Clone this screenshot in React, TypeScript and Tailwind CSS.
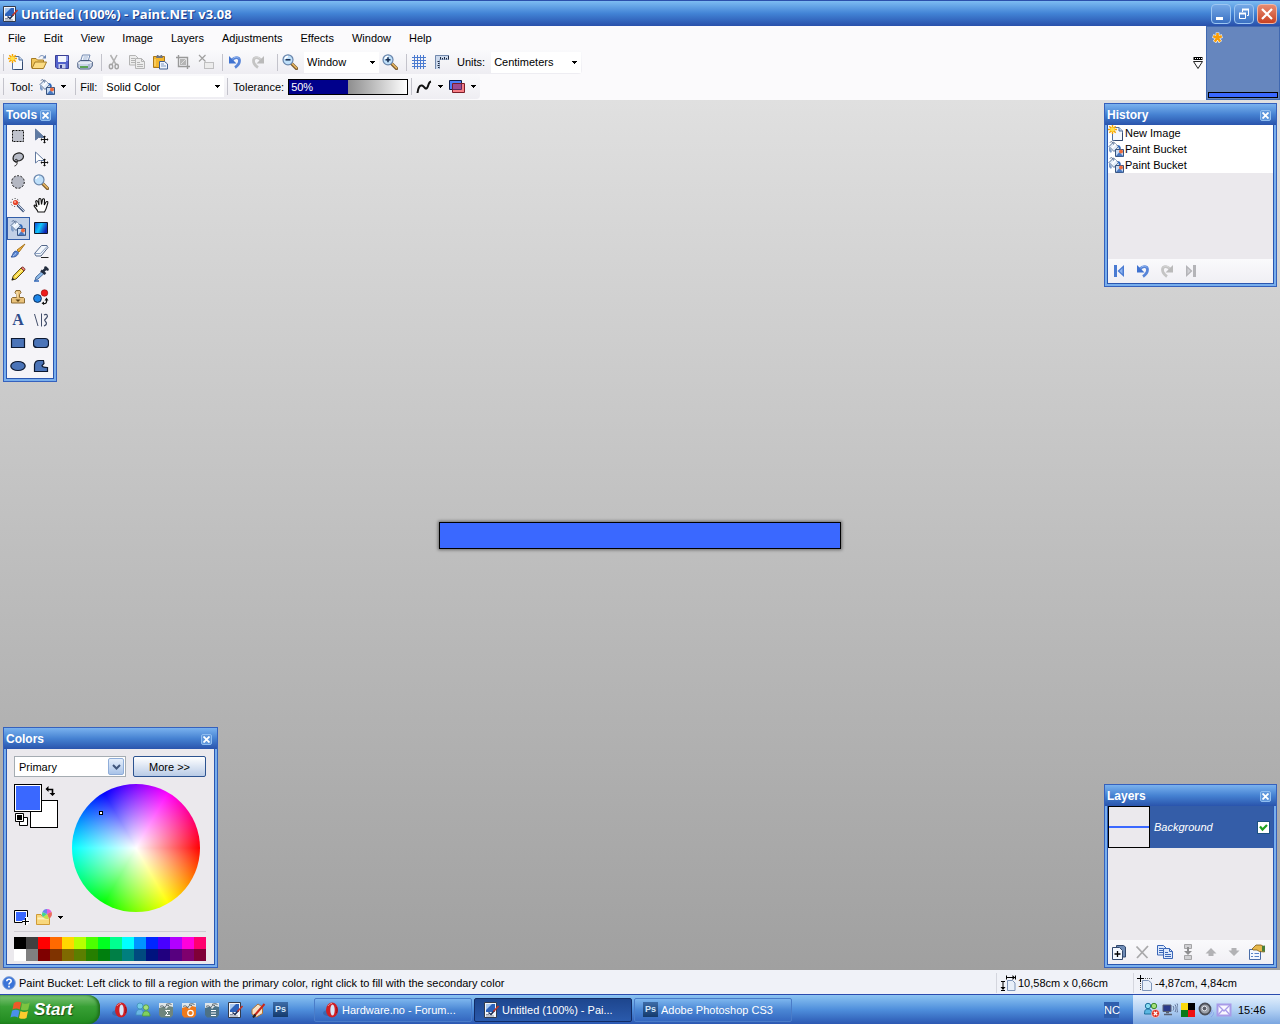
import type { ReactNode } from "react";
import clsx from "clsx";

type IconProps = { children: ReactNode; size?: string };

const Icon = ({ children, size = "size-4" }: IconProps) => (
  <svg viewBox="0 0 16 16" className={clsx("shrink-0", size)} fill="none" aria-hidden="true">
    {children}
  </svg>
);

const Caret = () => (
  <svg viewBox="0 0 5 3" className="h-[3px] w-[5px] shrink-0" shapeRendering="crispEdges" aria-hidden="true">
    <path d="M0 0h5v1H4v1H3v1H2V2H1V1H0z" fill="#000" />
  </svg>
);

/* ---------- toolbar icons ---------- */

const NewIcon = () => (
  <Icon>
    <path d="M4.500 2.500h6.500l3.500 3.500v9.500h-10z" fill="#f4f8fe" stroke="#54719c" />
    <path d="M11 2.500V6h3.500" fill="#c4d6ee" stroke="#54719c" />
    <path d="M14.500 8v7.500h-8" stroke="#33496e" />
    <path d="M4.500 0v9M0 4.500h9M1.300 1.300l6.400 6.400M7.700 1.300L1.300 7.700" stroke="#f7a400" strokeWidth="1.500" />
    <circle cx="4.500" cy="4.500" r="2.200" fill="#ffe14a" />
  </Icon>
);

const OpenIcon = () => (
  <Icon>
    <path d="M.5 13.500v-9h4.500l1.500 1.500h6v7.500z" fill="#f0c65c" stroke="#a67c25" />
    <path d="M1 14.500l3-6.500h11.500l-3 6.500z" fill="#fbdc84" stroke="#a67c25" />
    <path d="M8 3.500c1.500-2.500 4-2.500 5.500-.5" stroke="#6a86b4" />
    <path d="M15 .8V4.500h-3.700z" fill="#6a86b4" />
  </Icon>
);

const SaveIcon = () => (
  <Icon>
    <path d="M1.500 1.500h13v13H3l-1.500-1.500z" fill="#5362cc" stroke="#3a3f94" />
    <path d="M4 2h8v6H4z" fill="#f3f6fd" />
    <path d="M12 2h2v5h-2z" fill="#8d9be8" />
    <path d="M4.500 10h7v4.500h-7z" fill="#c5cceb" />
    <path d="M6 11h2v3H6z" fill="#343d8c" />
  </Icon>
);

const PrintIcon = () => (
  <Icon>
    <path d="M5.500 1h7.500l-2 6.500H3.500z" fill="#f7fbff" stroke="#7188b0" />
    <path d="M6.500 3h4.500M6 5h4.500" stroke="#9db1d2" />
    <path d="M.8 8.500l2.500-2h9.500l2.500 1.500v4l-2.500 3H3l-2.200-1.500z" fill="#c9d4e6" stroke="#495c80" />
    <path d="M1 9h11l3-1" stroke="#fff" />
    <path d="M3 12h8v2H3z" fill="#5ba454" />
    <path d="M12 10v4" stroke="#8c9dbb" />
  </Icon>
);

const CutIcon = () => (
  <Icon>
    <path d="M4.500 1l5.500 9.500M11 1L6 10.500" stroke="#b1b1b1" strokeWidth="1.500" />
    <ellipse cx="5" cy="12.500" rx="1.700" ry="2.300" stroke="#a3a3a3" strokeWidth="1.400" />
    <ellipse cx="10.700" cy="12.500" rx="1.700" ry="2.300" stroke="#a3a3a3" strokeWidth="1.400" />
  </Icon>
);

const CopyIcon = ({ blue = false }: { blue?: boolean }) => {
  const line = blue ? "#3a66b8" : "#b4b4b4";
  const paper = blue ? "#dce9fc" : "#ededed";
  return (
    <Icon>
      <path d="M.5 1.500h6l2.500 2.500v7H.5z" fill={paper} stroke={line} />
      <path d="M2 4.500h4M2 6.500h5M2 8.500h5" stroke={line} />
      <path d="M6.500 4.500h6l3 3v7h-9z" fill={paper} stroke={line} />
      <path d="M12.500 4.500v3h3M8 8.500h3M8 10.500h6M8 12.500h6" stroke={line} />
    </Icon>
  );
};

const PasteIcon = () => (
  <Icon>
    <path d="M1.500 2.500h11v11h-11z" fill="#f3b62c" stroke="#a9771a" />
    <path d="M5 1h5l1 3H4z" fill="#6e7480" />
    <path d="M6.500 1h2v1h-2z" fill="#e6e9ee" />
    <path d="M3 5v7" stroke="#ffe08b" />
    <path d="M7.500 7.500h5l3 2.500v5h-8z" fill="#eef4fd" stroke="#43608f" />
    <path d="M9 10h3M9 12h5" stroke="#829bc2" />
  </Icon>
);

const CropIcon = () => (
  <Icon>
    <path d="M3.500 1v11.500H15M1 3.500h11.500V15" stroke="#999" strokeWidth="1.400" />
    <path d="M5 5h6v6H5z" fill="#b5b5b5" />
    <path d="M6 10l5-5" stroke="#ddd" />
  </Icon>
);

const DeselectIcon = () => (
  <Icon>
    <path d="M1 1l6.500 6.500M7.500 1L1 7.500" stroke="#a0a0a0" strokeWidth="1.200" />
    <path d="M6.500 8.500h9v6h-9z" fill="#ececec" stroke="#8e8e8e" strokeDasharray="1 1" />
  </Icon>
);

const UndoIcon = ({ mirrored = false }: { mirrored?: boolean }) => (
  <Icon>
    <g transform={mirrored ? "matrix(-1 0 0 1 16 0)" : undefined}>
      <path
        d="M5 6c3-3.500 7.500-3 7.500.8 0 2.700-1.500 4.700-4.500 6.700"
        stroke={mirrored ? "#c4c4c4" : "#5784d8"}
        strokeWidth="2.800"
      />
      <path d="M2 2v7.500h7.500z" fill={mirrored ? "#bababa" : "#3f72d0"} />
      <path d="M5.500 5c2-2.200 5-2.800 6.500-.5" stroke={mirrored ? "#dadada" : "#9fc0f4"} />
    </g>
  </Icon>
);

const LensIcon = ({ sign }: { sign?: "plus" | "minus" }) => (
  <Icon>
    <path d="M9 9l5.500 5.500" stroke="#7c5c2e" strokeWidth="3.200" strokeLinecap="round" />
    <path d="M9.500 9l5 5" stroke="#ecba63" strokeWidth="1.500" strokeLinecap="round" />
    <circle cx="6" cy="5.800" r="5" fill="#bfe0fa" stroke="#6a86ac" strokeWidth="1.200" />
    <path d="M3 5a3.200 3.200 0 013-2.500" stroke="#fff" strokeWidth="1.500" />
    {sign && <path d="M3.500 5.800h5" stroke="#12284c" strokeWidth="1.500" />}
    {sign === "plus" && <path d="M6 3.300v5" stroke="#12284c" strokeWidth="1.500" />}
  </Icon>
);

const GridIcon = () => (
  <Icon>
    <path d="M3.500 1v14M6.500 1v14M9.500 1v14M12.500 1v14M1 3.500h14M1 6.500h14M1 9.500h14M1 12.500h14" stroke="#4b7bd0" />
  </Icon>
);

const RulerIcon = () => (
  <Icon>
    <path d="M1 1h14v4.500H5.500V15H1z" fill="#ccd9ec" />
    <path d="M1.500 15V1.500H15" stroke="#7289ad" />
    <path d="M5.500 15V5.500H15" stroke="#9fb3d1" />
    <path d="M6.500 3v2.500M8.500 4v1.500M10.500 3v2.500M12.500 4v1.500M14.500 2v3.500M3.500 7.500h2M4 9.500h1.500M3.500 11.500h2M4 13.500h1.500" stroke="#1c2942" />
  </Icon>
);

const BucketIcon = () => (
  <Icon>
    <path d="M1 5.500L5.500 1l5 4.500L6 10.500z" fill="#e3edf9" stroke="#5c7497" />
    <path d="M4 7l4-4" stroke="#fff" strokeWidth="1.500" />
    <path d="M2 1.500c1-1.500 3-1 3.500 2" stroke="#4b6288" />
    <path d="M10 5c2 .5 2 2 1.500 4" stroke="#2f67b8" strokeWidth="2" />
    <path d="M7.500 8.500h8v7h-8z" fill="#c9dcf3" stroke="#39547f" />
    <path d="M8 15l3.500-4 4 4.500z" fill="#4978c0" />
    <circle cx="13" cy="10.500" r="2" fill="#ee6b3c" />
    <path d="M1 6l3 4-1 2-2-2z" fill="#7d9cc8" />
  </Icon>
);

const CurveIcon = () => (
  <Icon>
    <path d="M1.500 14c.5-5 2-8 4.500-7.500S9 11 11 9s1-6 4-6.500" stroke="#111" strokeWidth="2" />
  </Icon>
);

const BlendIcon = () => (
  <Icon>
    <path d="M.5 1.500h12v9H.5z" fill="#4a7ffb" stroke="#10204c" />
    <path d="M3.500 4.500h12v9h-12z" fill="#f77f86" stroke="#7c1d28" />
    <path d="M4 5h8v5H4z" fill="#9b4b93" />
    <path d="M4 10.500h8.500V5" stroke="#5a2a62" />
  </Icon>
);

/* ---------- tool palette icons ---------- */

const ArrowIcon = ({ fill }: { fill: string }) => (
  <Icon>
    <path d="M2.500 1v11l3-2.500 2 0h4z" fill={fill} stroke="#62799f" />
    <path d="M11.500 8v7M8 11.500h7" stroke="#111" strokeWidth="1.200" />
    <path d="M10 9l1.500-1.500L13 9zM10 14l1.500 1.500L13 14zM9 10l-1.500 1.500L9 13zM14 10l1.500 1.500L14 13z" fill="#111" />
  </Icon>
);

const LassoIcon = () => (
  <Icon>
    <path d="M5 10.500C2 9 2.500 4 6.500 2.500s7 .5 7 3-3 4.500-6 4.500z" fill="#b7bbc7" stroke="#222" strokeWidth="1.200" />
    <path d="M5 9c1.500-1.500 3.500 0 2.500 1.500S4 11 4.500 9.500M7 11c.5 2-.5 3.500-2.500 4" stroke="#222" />
  </Icon>
);

const WandIcon = () => (
  <Icon>
    <path d="M7.500 8l6.500 6.500" stroke="#4c5f82" strokeWidth="2.600" />
    <path d="M8 8l6 6" stroke="#c9d8ee" />
    <circle cx="5" cy="5.500" r="4" stroke="#222" strokeDasharray="1 2" />
    <circle cx="5.500" cy="5.500" r="2.600" fill="#e5452c" />
    <circle cx="5" cy="5" r="1" fill="#ffb29c" />
  </Icon>
);

const HandIcon = () => (
  <Icon>
    <path
      d="M5 15c-.5-2.500-3-4-4-6.200.8-1.300 2-.3 3 1L2.700 4.500c.6-1.300 1.800-1 2.200.3L6 8 5.800 2.500c.4-1.500 2-1.300 2.200 0L8.500 7.500l1-5c.6-1.300 2-.9 2 .5L11.300 8l1.700-3c.8-1 2.200-.4 1.800.8-.8 3-1.300 6.200-3.300 9.200z"
      fill="#fff"
      stroke="#111"
      strokeWidth="1.100"
    />
  </Icon>
);

const BrushIcon = () => (
  <Icon>
    <path d="M15 1l-6 8-2-2z" fill="#f3b440" stroke="#a8741d" />
    <path d="M8.500 9.500C8 13 4.500 14.500 1 14c1.500-1 1.500-3.500 3-5s2.500-1 4.500.5z" fill="#5b86d2" stroke="#274b90" strokeWidth=".8" />
    <path d="M3 13c1.500-.5 2-2 3-3" stroke="#b6cff5" />
  </Icon>
);

const EraserIcon = () => (
  <Icon>
    <path d="M1.500 10.500l7-8h5.500l1 2-7 8.500H3z" fill="#f3f7fc" stroke="#53678a" />
    <path d="M1.500 10.500h6L14.500 3" stroke="#8da2c4" />
    <path d="M8 14.500h7.500" stroke="#222" />
  </Icon>
);

const PencilIcon = () => (
  <Icon>
    <path d="M2 14l1.200-4L11 2l3 3-8 8z" fill="#f9d944" stroke="#5d4d14" />
    <path d="M11 2l1-1c1-.6 3.500 1.700 3 3l-1 1z" fill="#ec8178" stroke="#703029" strokeWidth=".8" />
    <path d="M1.500 14.500l1-3 2 2z" fill="#222" />
    <path d="M5 11l7-7" stroke="#fff3a8" />
  </Icon>
);

const DropperIcon = () => (
  <Icon>
    <path d="M2 14.500l1-3.500 6-5.500 2 2L5 13z" fill="#8fbbe9" stroke="#4a6c9c" />
    <path d="M8 4.500L12.500 8M10.500 5l3-3" stroke="#222c3e" strokeWidth="2.500" />
    <path d="M12.500 1.500l2 2" stroke="#222c3e" strokeWidth="2.500" strokeLinecap="round" />
    <path d="M1 15h5" stroke="#2f67b8" strokeWidth="1.500" />
  </Icon>
);

const StampIcon = () => (
  <Icon>
    <path d="M6 1.500h4l1 2-1.500 2v3h4l1 1v4.500h-13V9.500l1-1h4v-3L5 3.500z" fill="#e9c27c" stroke="#8c6b33" />
    <path d="M7 3v5" stroke="#fff1cf" />
    <path d="M5.500 10.500h5L8 13z" fill="#5f4516" />
  </Icon>
);

const RecolorIcon = () => (
  <Icon>
    <circle cx="11.500" cy="4" r="3.300" fill="#ee1c1c" stroke="#8c0a0a" strokeWidth=".6" />
    <circle cx="4.500" cy="9.500" r="3.900" fill="#1d86e8" stroke="#0c2c5a" />
    <path d="M10.500 14.500c2.500.3 3.500-1 3-3.500" stroke="#111" strokeWidth="1.300" />
    <path d="M11.500 11.500l2-3 2 3zM11 16l-2.500-1.700L11 12.500z" fill="#111" />
  </Icon>
);

const LineIcon = () => (
  <Icon>
    <path d="M1.500 2L5 14M8.500 1.500v13" stroke="#44506c" />
    <path d="M11 3c3-2 4.500 1 2.500 3s-2.500 2-1 3.500 1.500 3-1.500 4.500" stroke="#44506c" strokeWidth="1.200" />
  </Icon>
);

const ShapeIcon = ({ d }: { d: string }) => (
  <Icon>
    <path d={d} fill="#4b74b8" stroke="#0c1830" strokeWidth="1.200" />
  </Icon>
);

const tools: { name: string; icon: ReactNode }[] = [
  {
    name: "Rectangle Select",
    icon: (
      <Icon>
        <path d="M2.500 2.500h11v11h-11z" fill="#bfc2cc" stroke="#111" strokeDasharray="2 1" />
      </Icon>
    ),
  },
  { name: "Move Selected Pixels", icon: <ArrowIcon fill="#5e7aa3" /> },
  { name: "Lasso Select", icon: <LassoIcon /> },
  { name: "Move Selection", icon: <ArrowIcon fill="#fff" /> },
  {
    name: "Ellipse Select",
    icon: (
      <Icon>
        <circle cx="8" cy="8" r="6.300" fill="#b4b7c2" stroke="#111" strokeDasharray="2 1.500" />
      </Icon>
    ),
  },
  { name: "Zoom", icon: <LensIcon /> },
  { name: "Magic Wand", icon: <WandIcon /> },
  { name: "Pan", icon: <HandIcon /> },
  { name: "Paint Bucket", icon: <BucketIcon /> },
  {
    name: "Gradient",
    icon: (
      <Icon>
        <defs>
          <linearGradient id="tool-gradient" x1="0" y1="0" x2="1" y2=".4">
            <stop offset="0" stopColor="#0d3fd8" />
            <stop offset=".5" stopColor="#10c8fa" />
            <stop offset="1" stopColor="#1226b4" />
          </linearGradient>
        </defs>
        <path d="M1.500 2.500h13v11h-13z" fill="url(#tool-gradient)" stroke="#101828" />
      </Icon>
    ),
  },
  { name: "Paintbrush", icon: <BrushIcon /> },
  { name: "Eraser", icon: <EraserIcon /> },
  { name: "Pencil", icon: <PencilIcon /> },
  { name: "Color Picker", icon: <DropperIcon /> },
  { name: "Clone Stamp", icon: <StampIcon /> },
  { name: "Recolor", icon: <RecolorIcon /> },
  {
    name: "Text",
    icon: (
      <span className="w-4 text-center font-['Liberation_Serif',serif] text-base leading-4 font-bold text-[#2f4c8c]">
        A
      </span>
    ),
  },
  { name: "Line or Curve", icon: <LineIcon /> },
  { name: "Rectangle", icon: <ShapeIcon d="M1.500 3.500h13v9h-13z" /> },
  { name: "Rounded Rectangle", icon: <ShapeIcon d="M4 3.500h8c2 0 3.500 1.500 3.500 3.500v2c0 2-1.500 3.500-3.500 3.500H4C2 12.500.5 11 .5 9V7C.5 5 2 3.500 4 3.500z" /> },
  { name: "Ellipse", icon: <ShapeIcon d="M.8 8a7.200 4.500 0 0114.400 0A7.200 4.500 0 01.8 8z" /> },
  { name: "Freeform Shape", icon: <ShapeIcon d="M1.500 13.500V6.500C2 4 4 2.500 6 2.500h4.500l.5 3-2 2c0 1.500 1.500 2 5.500 2v4z" /> },
];

/* ---------- shared pieces ---------- */

const ToolButton = ({ label, children }: { label: string; children: ReactNode }) => (
  <button type="button" aria-label={label} className="flex h-6 w-[23px] shrink-0 items-center pl-[3px]">
    {children}
  </button>
);

const Separator = () => <span className="mr-px ml-[3px] h-[17px] w-px shrink-0 bg-[#c3c3cb]" />;

const Combo = ({ id, value, width }: { id: string; value: string; width: string }) => (
  <span className={clsx("flex h-[21px] shrink-0 items-center bg-white pr-1", width)}>
    <select id={id} aria-label={value} className="h-full min-w-0 flex-1 appearance-none pl-[3px] outline-none">
      <option>{value}</option>
    </select>
    <Caret />
  </span>
);

type PaletteProps = { title: string; className: string; children: ReactNode };

const Palette = ({ title, className, children }: PaletteProps) => (
  <section
    aria-label={title}
    className={clsx("absolute flex flex-col border border-[#3561bd] bg-[#78aeec]", className)}
  >
    <header className="flex h-[21px] shrink-0 items-center justify-between bg-linear-to-b from-[#7ab2ee] via-[#4682d2] to-[#2a54ac] pt-px pr-[5px] pl-0.5">
      <h2 className="text-xs font-bold text-white">{title}</h2>
      <button
        type="button"
        aria-label={`Close ${title}`}
        className="flex size-[11px] items-center justify-center rounded-xs border border-[#8fbdf0] bg-[#5f97dc]"
      >
        <svg viewBox="0 0 7 7" className="size-[7px]" aria-hidden="true">
          <path d="M.5.5l6 6M6.500.5l-6 6" stroke="#fff" strokeWidth="1.800" />
        </svg>
      </button>
    </header>
    <div className="mx-0.5 mb-0.5 flex flex-1 flex-col border border-t-0 border-[#2a56b0] bg-[#ebe9ed]">{children}</div>
  </section>
);

/* ---------- window chrome ---------- */

const AppIcon = () => (
  <Icon>
    <path d="M1.500.5h12v15h-12z" fill="#f3f5fa" stroke="#333b4c" />
    <path d="M3 2h9v8H3z" fill="#2c62bb" />
    <path d="M3 2h6L3 8z" fill="#a9c9f2" />
    <path d="M3 12.500h3M3 14h8" stroke="#8c93a3" />
    <path d="M5.500 10.500L8 12.500l3-3.500" stroke="#1d2c52" strokeWidth="1.600" />
    <path d="M10.500 9.500l5-5.500" stroke="#c23426" strokeWidth="1.600" />
  </Icon>
);

const TitleBar = () => (
  <header className="flex h-[26px] shrink-0 items-center border-t border-[#2b50ab] bg-linear-to-b from-[#7dbcf2] via-[#4283d5] to-[#2950ab] pr-[3px] pl-0.5">
    <div className="flex flex-1 items-center gap-[3px]">
      <AppIcon />
      <h1 className="font-['Open_Sans',sans-serif] text-[13px] font-bold text-white [text-shadow:1px_1px_#1c3a86]">
        Untitled (100%) - Paint.NET v3.08
      </h1>
    </div>
    <div className="flex gap-[3px]">
      <button type="button" aria-label="Minimize" className="flex size-5 items-center justify-center rounded-sm border border-[#9cc6f2] bg-linear-to-b from-[#74a8e6] to-[#3a70c2]">
        <Icon>
          <path d="M3 11h7v3H3z" fill="#fff" />
        </Icon>
      </button>
      <button type="button" aria-label="Restore" className="flex size-5 items-center justify-center rounded-sm border border-[#9cc6f2] bg-linear-to-b from-[#74a8e6] to-[#3a70c2]">
        <Icon>
          <path d="M6.500 6V3.500h6v6H11" stroke="#fff" />
          <path d="M6 3.500h7" stroke="#fff" strokeWidth="2" />
          <path d="M3.500 7.500h6v5h-6z" stroke="#fff" />
          <path d="M3 7.500h7" stroke="#fff" strokeWidth="2" />
        </Icon>
      </button>
      <button type="button" aria-label="Close" className="flex size-5 items-center justify-center rounded-sm border border-[#f0b6a4] bg-linear-to-b from-[#e68a70] to-[#c8401f]">
        <Icon>
          <path d="M3 3l10 10M13 3L3 13" stroke="#fff" strokeWidth="2.200" />
        </Icon>
      </button>
    </div>
  </header>
);

const menus = ["File", "Edit", "View", "Image", "Layers", "Adjustments", "Effects", "Window", "Help"];

const MenuBar = () => (
  <nav className="flex h-6 items-center gap-[18px] pl-2">
    {menus.map((menu) => (
      <button key={menu} type="button">
        {menu}
      </button>
    ))}
  </nav>
);

const MainToolbar = () => (
  <div className="flex h-6 w-fit items-center rounded-r bg-linear-to-b from-[#fafafc] to-[#eeedf2] pr-px">
    <Separator />
    <ToolButton label="New"><NewIcon /></ToolButton>
    <ToolButton label="Open"><OpenIcon /></ToolButton>
    <ToolButton label="Save"><SaveIcon /></ToolButton>
    <ToolButton label="Print"><PrintIcon /></ToolButton>
    <span className="pl-px" />
    <Separator />
    <ToolButton label="Cut"><CutIcon /></ToolButton>
    <ToolButton label="Copy"><CopyIcon /></ToolButton>
    <ToolButton label="Paste"><PasteIcon /></ToolButton>
    <ToolButton label="Crop to Selection"><CropIcon /></ToolButton>
    <ToolButton label="Deselect"><DeselectIcon /></ToolButton>
    <span className="pl-px" />
    <Separator />
    <ToolButton label="Undo"><UndoIcon /></ToolButton>
    <ToolButton label="Redo"><UndoIcon mirrored /></ToolButton>
    <span className="pl-1" />
    <Separator />
    <ToolButton label="Zoom Out"><LensIcon sign="minus" /></ToolButton>
    <span className="pl-0.5" />
    <Combo id="zoom" value="Window" width="w-[75px]" />
    <ToolButton label="Zoom In"><LensIcon sign="plus" /></ToolButton>
    <span className="pl-px" />
    <Separator />
    <ToolButton label="Grid"><GridIcon /></ToolButton>
    <ToolButton label="Rulers"><RulerIcon /></ToolButton>
    <label htmlFor="units" className="pr-1.5 pl-[3px]">Units:</label>
    <Combo id="units" value="Centimeters" width="w-[90px]" />
  </div>
);

const ToolOptions = () => (
  <div className="flex h-[25px] w-fit items-center rounded-r bg-linear-to-b from-[#fafafc] to-[#eeedf2] pr-1">
    <Separator />
    <span className="pl-[5px]">Tool:</span>
    <button type="button" aria-label="Choose tool" className="flex items-center gap-1.5 pl-1.5">
      <BucketIcon />
      <Caret />
    </button>
    <span className="pl-1.5" />
    <Separator />
    <label htmlFor="fill" className="pr-1.5 pl-[3px]">Fill:</label>
    <Combo id="fill" value="Solid Color" width="w-[121px]" />
    <Separator />
    <span id="tolerance" className="px-1">Tolerance:</span>
    <div
      role="meter"
      aria-labelledby="tolerance"
      aria-valuenow={50}
      className="flex h-4 w-[120px] border border-black bg-linear-to-r from-black/70 to-white"
    >
      <span className="flex w-1/2 items-center bg-[#00008b] pl-0.5 text-white">50%</span>
    </div>
    <Separator />
    <button type="button" aria-label="Antialiasing" className="flex items-center gap-1.5 pl-[3px]">
      <CurveIcon />
      <Caret />
    </button>
    <button type="button" aria-label="Blending" className="flex items-center gap-1.5 pl-1.5">
      <BlendIcon />
      <Caret />
    </button>
  </div>
);

const ImageStrip = () => (
  <div className="flex h-full items-center">
    <button type="button" aria-label="Image list" className="px-[3px]">
      <svg viewBox="0 0 10 12" className="h-3 w-2.5" fill="none" aria-hidden="true">
        <path d="M.5 0h9v3h-9z" fill="#000" />
        <path d="M2 1.500h7" stroke="#fff" strokeDasharray="1 1" />
        <path d="M.5 4.500h9L5 11.500z" stroke="#222" />
      </svg>
    </button>
    <div className="flex h-full w-[74px] flex-col justify-between border border-[#4068b0] bg-[#6686be] p-px">
      <svg viewBox="0 0 12 12" className="mt-1 ml-1 size-[11px]" fill="none" aria-hidden="true">
        <path d="M6 .5V6M.8 4.500L6 6M11.200 4.500L6 6M2.800 11L6 6l3.200 5" stroke="#fff" strokeWidth="4" />
        <path d="M6 1V6M1.300 4.700L6 6M10.700 4.700L6 6M3 10.500L6 6l3 4.500" stroke="#f99d07" strokeWidth="2.800" />
      </svg>
      <div className="h-1.5 border border-black bg-[#3a68ff]" />
    </div>
  </div>
);

/* ---------- palettes ---------- */

const ToolsPalette = () => (
  <Palette title="Tools" className="top-[3px] left-[3px] w-[54px]">
    <div className="grid grid-cols-2 bg-[#f5f4f8]">
      {tools.map(({ name, icon }) => (
        <button
          key={name}
          type="button"
          aria-label={name}
          className={clsx(
            "flex h-[23px] items-start pt-[3px] pl-[3px]",
            name === "Paint Bucket" && "bg-[#c2d0e6] inset-ring inset-ring-[#335ea8]",
          )}
        >
          {icon}
        </button>
      ))}
    </div>
  </Palette>
);

const history = [
  { label: "New Image", icon: <NewIcon /> },
  { label: "Paint Bucket", icon: <BucketIcon /> },
  { label: "Paint Bucket", icon: <BucketIcon /> },
];

const SkipIcon = ({ disabled = false }: { disabled?: boolean }) => (
  <Icon>
    <g transform={disabled ? "matrix(-1 0 0 1 16 0)" : undefined} fill={disabled ? "#b4b4b8" : "#4a7bd2"}>
      <path d="M3 2h3v12H3zM13 2v12L6.500 8z" />
      <path d="M11.500 5v6L8.500 8z" fill={disabled ? "#d2d2d6" : "#8db4f0"} />
    </g>
  </Icon>
);

const HistoryPalette = () => (
  <Palette title="History" className="top-[3px] right-[3px] h-[184px] w-[173px]">
    <ul className="flex-1">
      {history.map(({ label, icon }, i) => (
        <li key={i} className="flex h-4 items-center gap-px bg-white">
          {icon}
          {label}
        </li>
      ))}
    </ul>
    <div className="flex h-6 items-center gap-px bg-linear-to-b from-[#fafafc] to-[#f0eff4]">
      <ToolButton label="Rewind"><SkipIcon /></ToolButton>
      <ToolButton label="Undo"><UndoIcon /></ToolButton>
      <ToolButton label="Redo"><UndoIcon mirrored /></ToolButton>
      <ToolButton label="Fast Forward"><SkipIcon disabled /></ToolButton>
    </div>
  </Palette>
);

const swatches = [
  "bg-[#000000]", "bg-[#404040]", "bg-[#ff0000]", "bg-[#ff6a00]", "bg-[#ffd800]", "bg-[#b6ff00]", "bg-[#4cff00]", "bg-[#00ff21]",
  "bg-[#00ff90]", "bg-[#00ffff]", "bg-[#0094ff]", "bg-[#0026ff]", "bg-[#4800ff]", "bg-[#b200ff]", "bg-[#ff00dc]", "bg-[#ff006e]",
  "bg-[#ffffff]", "bg-[#808080]", "bg-[#7f0000]", "bg-[#7f3300]", "bg-[#7f6a00]", "bg-[#5b7f00]", "bg-[#267f00]", "bg-[#007f0e]",
  "bg-[#007f46]", "bg-[#007f7f]", "bg-[#004a7f]", "bg-[#00137f]", "bg-[#21007f]", "bg-[#57007f]", "bg-[#7f006e]", "bg-[#7f0037]",
];

const ColorsPalette = () => (
  <Palette title="Colors" className="bottom-[2px] left-[3px] h-[241px] w-[215px]">
    <div className="flex flex-1 flex-col pt-[7px] pr-2 pl-[7px]">
      <div className="flex gap-[7px]">
        <span className="flex h-[21px] w-28 items-center border border-[#a5acb2] bg-white pr-px">
          <select aria-label="Color slot" className="h-full min-w-0 flex-1 appearance-none pl-1 outline-none">
            <option>Primary</option>
          </select>
          <span className="flex h-[17px] w-4 items-center justify-center rounded-xs border border-[#8fadd9] bg-linear-to-b from-[#e6effb] to-[#a9c3e8]">
            <svg viewBox="0 0 9 6" className="h-1.5 w-[9px]" fill="none" aria-hidden="true">
              <path d="M1 1l3.500 3.500L8 1" stroke="#40567c" strokeWidth="2" />
            </svg>
          </span>
        </span>
        <button
          type="button"
          className="h-[21px] w-[73px] rounded-xs border border-[#2c5390] bg-linear-to-b from-white to-[#b9cbe6]"
        >
          More &gt;&gt;
        </button>
      </div>
      <div className="flex pt-[7px]">
        <div className="flex h-[141px] w-[58px] flex-col justify-between">
          <div className="relative size-11">
            <div className="absolute right-0 bottom-0 size-7 border border-black bg-white" />
            <div className="absolute top-0 left-0 size-7 border border-black bg-[#3a68ff] outline -outline-offset-2 outline-white" />
            <svg viewBox="0 0 10 10" className="absolute top-0.5 right-[3px] size-2.5" fill="none" aria-hidden="true">
              <path d="M2 3.500h5.500V8" stroke="#000" strokeWidth="1.600" />
              <path d="M3.500 0v6L.5 3zM4.500 7h6l-3 3z" fill="#000" />
            </svg>
            <svg viewBox="0 0 14 14" className="absolute bottom-px left-px size-3.5" fill="none" aria-hidden="true">
              <path d="M4.500 4.500h8v8h-8z" fill="#fff" stroke="#000" />
              <path d="M.5.5h8v8h-8z" fill="#fff" stroke="#000" />
              <path d="M2 2h5v5H2z" fill="#000" />
            </svg>
          </div>
          <div className="flex items-center gap-1.5">
            <button type="button" aria-label="Add color to palette">
              <Icon>
                <path d="M.5 1.500h13v12H.5z" fill="#fff" stroke="#000" />
                <path d="M2 3h10v9H2z" fill="#3a68ff" />
                <path d="M12.500 8v8M8.500 12.500h7.500" stroke="#fff" strokeWidth="3" />
                <path d="M11.500 9v7M8 12.500h7" stroke="#000" />
              </Icon>
            </button>
            <button type="button" aria-label="Palettes" className="flex items-center gap-1.5">
              <Icon>
                <path d="M.5 5.500H5l1 1.500h7.500v8.500H.5z" fill="#f8d77c" stroke="#d09a36" />
                <path d="M1.500 9.500h11" stroke="#fff1bd" strokeWidth="2" />
                <circle cx="11" cy="5" r="5" fill="#d9c6e6" />
                <path d="M11 5V0a5 5 0 014.500 3z" fill="#e45be0" />
                <path d="M11 5l4.500-2A5 5 0 0113 9.500z" fill="#ee6b5b" />
                <path d="M11 5l2 4.500A5 5 0 017 8z" fill="#c6e04a" />
                <path d="M11 5L7 8a5 5 0 01-.5-5z" fill="#3fd98c" />
                <path d="M11 5L6.500 3A5 5 0 0111 0z" fill="#6a86ee" />
              </Icon>
              <Caret />
            </button>
          </div>
        </div>
        <div className="relative size-32 rounded-full bg-[radial-gradient(closest-side,#fff,rgba(255,255,255,0)),conic-gradient(from_90deg,red,yellow,lime,cyan,blue,magenta,red)]">
          <span className="absolute top-[27px] left-[27px] size-1 border border-black bg-white" />
        </div>
      </div>
      <div className="mt-1.5 h-px bg-[#cfcdd4]" />
      <div className="mt-[5px] grid grid-cols-16">
        {swatches.map((color) => (
          <button key={color} type="button" aria-label="Swatch" className={clsx("h-3", color)} />
        ))}
      </div>
    </div>
  </Palette>
);

const LayersPalette = () => (
  <Palette title="Layers" className="right-[3px] bottom-[2px] h-[184px] w-[173px]">
    <div className="flex h-[42px] items-center gap-1 bg-[#345da8] pr-[3px] text-white">
      <div className="flex size-[42px] items-center border border-black bg-[#ebe9ed]">
        <div className="h-0.5 w-full bg-[#3a68ff]" />
      </div>
      <label htmlFor="background" className="flex-1 italic">
        Background
      </label>
      <span className="grid">
        <input
          id="background"
          type="checkbox"
          defaultChecked
          className="col-start-1 row-start-1 size-[13px] appearance-none border border-[#1c5180] bg-white"
        />
        <svg viewBox="0 0 13 13" className="pointer-events-none col-start-1 row-start-1 size-[13px]" fill="none" aria-hidden="true">
          <path d="M3 5.500l2.500 3L10 4" stroke="#21a121" strokeWidth="2.200" />
        </svg>
      </span>
    </div>
    <div className="flex-1" />
    <div className="flex h-6 items-center bg-linear-to-b from-[#fafafc] to-[#f0eff4]">
      <ToolButton label="Add New Layer">
        <Icon>
          <path d="M5.500 1.500h7l2 1.500v10h-9z" fill="#6f8cb6" stroke="#33496e" />
          <path d="M1.500 3.500h7l3 3v9h-10z" fill="#f4f8fe" stroke="#33496e" />
          <path d="M6.500 7v6M3.500 10h6" stroke="#000" strokeWidth="1.300" />
        </Icon>
      </ToolButton>
      <ToolButton label="Delete Layer">
        <Icon>
          <path d="M2.500 2.500l11 11.500M14 2L3 14" stroke="#a9a9ab" strokeWidth="1.800" />
        </Icon>
      </ToolButton>
      <ToolButton label="Duplicate Layer"><CopyIcon blue /></ToolButton>
      <ToolButton label="Merge Layer Down">
        <Icon>
          <path d="M4.500.5h7v4h-7zM4.500 11.500h7v4h-7z" fill="#d0d0d3" stroke="#a4a4a6" />
          <path d="M8 3v5" stroke="#8e8e90" strokeWidth="2" />
          <path d="M4 7h8l-4 4z" fill="#8e8e90" />
        </Icon>
      </ToolButton>
      <ToolButton label="Move Layer Up">
        <Icon>
          <path d="M8 4l5.500 5.500h-3V12h-5V9.500h-3z" fill="#b2b2b5" />
        </Icon>
      </ToolButton>
      <ToolButton label="Move Layer Down">
        <Icon>
          <path d="M8 12l5.500-5.500h-3V4h-5v2.500h-3z" fill="#b2b2b5" />
        </Icon>
      </ToolButton>
      <ToolButton label="Layer Properties">
        <Icon>
          <path d="M.5 5.500h11v10H.5z" fill="#f4f8fe" stroke="#4a6da8" />
          <path d="M2 9.500h2M5.500 9.500h4.500M2 12.500h2M5.500 12.500h4.500" stroke="#5b84c6" />
          <path d="M3 5l4-4h5l3.500 2v5l-5-.5L8 6H4z" fill="#e7b84c" stroke="#7b5a18" strokeWidth=".8" />
          <path d="M13 2l3-.5v6H13z" fill="#4b7f3c" />
        </Icon>
      </ToolButton>
    </div>
  </Palette>
);

const Workspace = () => (
  <main className="relative flex flex-1 items-center justify-center bg-linear-to-b from-[#e0e0e0] to-[#a0a0a0]">
    <div className="h-[27px] w-[402px] border border-black bg-[#3a68ff] shadow-[0_0_3px_1px_rgba(0,0,0,0.45)]" />
    <ToolsPalette />
    <HistoryPalette />
    <ColorsPalette />
    <LayersPalette />
  </main>
);

/* ---------- status bar and task bar ---------- */

const StatusBar = () => (
  <footer className="flex h-6 shrink-0 items-center bg-[#f0f2f8] pt-0.5">
    <p className="flex flex-1 items-center gap-[3px] pl-0.5">
      <Icon size="size-3.5">
        <circle cx="8" cy="8" r="7.300" fill="#3a74d8" stroke="#8ea9d6" />
        <path d="M5.500 6c0-3 5-3 5 0 0 1.700-2.500 1.700-2.500 3.700M8 11v2" stroke="#fff" strokeWidth="1.800" />
      </Icon>
      Paint Bucket: Left click to fill a region with the primary color, right click to fill with the secondary color
    </p>
    <p className="flex h-5 w-[137px] items-center gap-0.5 border-l border-[#d4d6de] pl-[3px]">
      <Icon>
        <path d="M7.500 5.500h5l2.500 2.500v7.500H7.500z" fill="#e8eff9" stroke="#7f95b8" />
        <path d="M6.500.5v4M15.500.5v4M7 2.500h8M1 6.500h4M1 15.500h4M3 7v7" stroke="#000" />
        <path d="M15 2.500L12.500 0v5zM3 15l-2.500-3h5z" fill="#000" />
      </Icon>
      10,58cm x 0,66cm
    </p>
    <p className="flex h-5 w-[147px] items-center gap-0.5 border-l border-[#d4d6de] pl-[3px]">
      <Icon>
        <path d="M5.500 5.500h6l3 2.500v7.500h-9z" fill="#e8eff9" stroke="#7f95b8" />
        <path d="M3.500 0v7M0 3.500h7" stroke="#000" />
        <path d="M8 3.500h7M3.500 8v8" stroke="#555" strokeDasharray="1 1" />
      </Icon>
      -4,87cm, 4,84cm
    </p>
  </footer>
);

const OperaIcon = () => (
  <Icon>
    <ellipse cx="5" cy="11" rx="5" ry="3" fill="#2e5596" opacity=".5" />
    <ellipse cx="9" cy="8" rx="6" ry="7.500" fill="#cf1f25" />
    <ellipse cx="9.500" cy="8" rx="2.200" ry="5.500" fill="#d9e6f6" />
    <path d="M5 4C6 2.300 7.500 1.500 9 1.500" stroke="#f58f8a" />
    <path d="M13.500 5c.8 2 .8 4 0 6" stroke="#8c1116" />
  </Icon>
);

const PeopleIcon = () => (
  <Icon>
    <circle cx="5" cy="4" r="3" fill="#73cbe8" stroke="#3f90b8" strokeWidth=".8" />
    <path d="M1 13c0-4 1.500-5.500 4-5.500S8.500 9 8.500 13z" fill="#6ab6e4" stroke="#3f90b8" strokeWidth=".8" />
    <circle cx="11" cy="5.500" r="2.700" fill="#a5e07c" stroke="#4f9b3e" strokeWidth=".8" />
    <path d="M7.500 14c0-3.500 1.500-5 3.500-5s4 1.500 4 5z" fill="#7fd05f" stroke="#4f9b3e" strokeWidth=".8" />
  </Icon>
);

const OfficeIcon = ({ tint, children }: { tint: string; children: ReactNode }) => (
  <Icon>
    <path d="M1 1h14v12l-2 2.500H3L1 13z" fill={tint} />
    <path d="M1 1h14v4l-4-1-3 3-2-2.500L1 6z" fill="#dfe5e8" />
    <path d="M2 4.500c2-1 3.500-1 4.500 1.500C7.500 3.500 9 3 11 3.500M8 2.500c2-1 3.500-1 5.500 0" stroke="#54626a" />
    {children}
  </Icon>
);

const PhotoshopIcon = () => (
  <span className="flex size-[15px] shrink-0 items-center justify-center bg-linear-to-b from-[#3d6ca8] to-[#143a6c] text-[9px] leading-none font-bold text-[#d6e8fa]">
    Ps
  </span>
);

const quickLaunch: { name: string; icon: ReactNode }[] = [
  { name: "Opera", icon: <OperaIcon /> },
  { name: "Messenger", icon: <PeopleIcon /> },
  {
    name: "Calc",
    icon: (
      <OfficeIcon tint="#6f857d">
        <path d="M12 8.500H7.500L10 11l-2.500 2.500H12" stroke="#fff" />
      </OfficeIcon>
    ),
  },
  {
    name: "Impress",
    icon: (
      <OfficeIcon tint="#ef7a1c">
        <circle cx="9.500" cy="11" r="2.700" stroke="#fff" strokeWidth="1.300" />
      </OfficeIcon>
    ),
  },
  {
    name: "Writer",
    icon: (
      <OfficeIcon tint="#4d7186">
        <path d="M7 8.500h5M7 11h5M7 13.500h5" stroke="#fff" />
      </OfficeIcon>
    ),
  },
  { name: "Paint.NET", icon: <AppIcon /> },
  {
    name: "Brush",
    icon: (
      <Icon>
        <path d="M2 7.500l6-5.500 4.500 3v6.500l-6 3.500L2 12z" fill="#f7e3c6" stroke="#b5722f" />
        <path d="M4 14L14.500 2" stroke="#c9271a" strokeWidth="2" />
        <path d="M3 15.500l2.500-3" stroke="#222" strokeWidth="2" />
      </Icon>
    ),
  },
  { name: "Photoshop", icon: <PhotoshopIcon /> },
];

const tasks = [
  { label: "Hardware.no - Forum...", icon: <OperaIcon />, active: false },
  { label: "Untitled (100%) - Pai...", icon: <AppIcon />, active: true },
  { label: "Adobe Photoshop CS3", icon: <PhotoshopIcon />, active: false },
];

const Taskbar = () => (
  <nav className="flex h-[30px] shrink-0 items-center border-t border-[#2a4cae] bg-linear-to-b from-[#8cc4f2] via-[#4f8fdc] via-50% to-[#2c58b2]">
    <button
      type="button"
      className="flex h-full w-[100px] items-center gap-1 rounded-r-xl bg-linear-to-b from-[#7cc576] via-[#38a035] via-40% to-[#1f8a1e] pl-2.5 text-[17px] font-bold text-white italic shadow-[inset_-2px_0_3px_#1d6b1c] [text-shadow:1px_1px_1px_#1c4d18]"
    >
      <Icon size="size-5">
        <path d="M3 2.500c2-1.500 4-1.500 6-.5L7.800 7.500C6 6.500 4 6.500 2 7.500z" fill="#ee5a28" />
        <path d="M9.800 2.300c2 1 4 1 6-.3l-1.200 5.500c-2 1-4 1-6 0z" fill="#7cc440" />
        <path d="M1.600 8.500c2-1 4-1 6 0l-1.200 5.500c-2-1-4-1-6 0z" fill="#4a90ea" />
        <path d="M8.400 8.800c2 1 4 1 6 0l-1.200 5.500c-2 1-4 1-6 0z" fill="#fccb2e" />
      </Icon>
      Start
    </button>
    <div className="flex w-[214px] gap-[7px] pl-3">
      {quickLaunch.map(({ name, icon }) => (
        <button key={name} type="button" aria-label={name} className="flex w-4 items-center">
          {icon}
        </button>
      ))}
    </div>
    <div className="flex flex-1 gap-0.5">
      {tasks.map(({ label, icon, active }) => (
        <button
          key={label}
          type="button"
          className={clsx(
            "flex h-6 w-[158px] items-center gap-[3px] rounded-xs border pl-2 text-white",
            active
              ? "border-[#122c66] bg-linear-to-b from-[#1e468e] to-[#2a5aac]"
              : "border-[#4a7cc8] bg-linear-to-b from-[#7db6ee] via-[#4a86d4] to-[#3568c0]",
          )}
        >
          {icon}
          <span className="truncate">{label}</span>
        </button>
      ))}
    </div>
    <button type="button" className="mr-3.5 h-4 w-[15px] bg-[#2f5fae] text-white">
      NC
    </button>
    <div className="flex h-full w-[147px] items-center gap-0.5 bg-linear-to-b from-[#e4f0fc] via-[#b4d2f4] to-[#7ba6e0] pl-[11px]">
      <Icon>
        <circle cx="4" cy="4" r="2.700" fill="#8adcf2" stroke="#1c6f9c" />
        <circle cx="10" cy="4" r="2.700" fill="#a5e07c" stroke="#3d8b2c" />
        <path d="M.5 12c0-4 1-5 3.500-5s4 1.500 4 5z" fill="#5bb7e2" stroke="#1c6f9c" />
        <circle cx="11.500" cy="11.500" r="4" fill="#de3022" stroke="#fff" strokeWidth=".6" />
        <path d="M9.800 9.800l3.400 3.400M13.200 9.800l-3.400 3.400" stroke="#fff" strokeWidth="1.300" />
      </Icon>
      <Icon>
        <path d="M1 3h8v6.500H1z" fill="#2a3b8c" stroke="#5a6172" />
        <path d="M2 12.500h8M4 10.500h3" stroke="#5a6172" strokeWidth="1.600" />
        <path d="M11 4c1 1.500 1 3 0 4.500M13 2.500c1.500 2.500 1.500 5 0 7.500M15 1.500c1.500 3 1.500 6 0 9" stroke="#5d6f94" />
      </Icon>
      <Icon>
        <path d="M1 1h7v7H1z" fill="#f9d80c" />
        <path d="M8 1h7v7H8z" fill="#000" />
        <path d="M1 8h7v7H1z" fill="#0b7a17" />
        <path d="M8 8h7v7H8z" fill="#ee1111" />
      </Icon>
      <Icon>
        <circle cx="7" cy="7" r="5.500" fill="#9da2aa" stroke="#4b4f58" strokeWidth="1.800" />
        <circle cx="6.500" cy="6.500" r="2.300" fill="#5b5f68" stroke="#dfe2e8" />
        <path d="M11 13c2-1 3-3 3-5M13 15c2-1.500 3-3.500 3-5" stroke="#8aa1ea" />
      </Icon>
      <Icon>
        <path d="M1.500 2.500h13v11h-13z" fill="#f9f8ff" stroke="#a89be8" strokeWidth="2" />
        <path d="M2 3l6 6 6-6M2 13l4.500-5M14 13L9.500 8" stroke="#a89be8" strokeWidth="1.300" />
      </Icon>
      <time className="pl-1">15:46</time>
    </div>
  </nav>
);

export default function App() {
  return (
    <div className="flex min-h-screen flex-col font-['Liberation_Sans',Arial,sans-serif] text-[11px] leading-4 text-black">
      <TitleBar />
      <div className="flex h-[74px] shrink-0 justify-between bg-[#fbfafc]">
        <div>
          <MenuBar />
          <MainToolbar />
          <ToolOptions />
        </div>
        <ImageStrip />
      </div>
      <Workspace />
      <StatusBar />
      <Taskbar />
    </div>
  );
}
